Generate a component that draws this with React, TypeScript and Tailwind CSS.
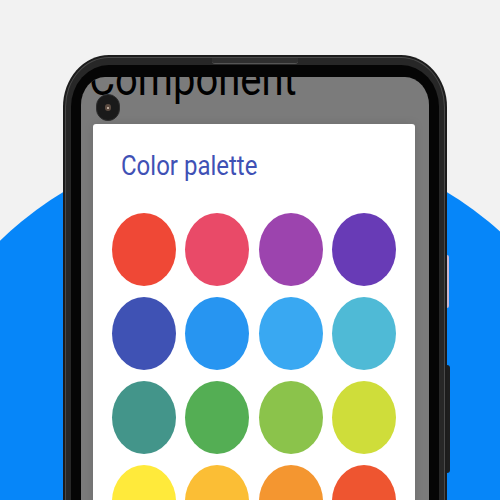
import React from "react";

const colors = [
  "#ef4836", "#e94a68", "#9c44ae", "#683bb6",
  "#3f52b4", "#2795f1", "#39a8f2", "#4fbad6",
  "#43958a", "#54ae54", "#8bc34b", "#cfdd3a",
  "#ffea3b", "#fbbe35", "#f49630", "#ee5530",
];

export default function App() {
  return (
    <div className="relative w-[500px] h-[500px] overflow-hidden bg-[#f2f2f2]">
      {/* blue backdrop */}
      <div className="absolute left-[-113px] top-[138px] w-[736px] h-[838px] rounded-full bg-[#0686f9]" />

      {/* side buttons */}
      <div className="absolute left-[447px] top-[255px] w-[2px] h-[53px] rounded-r-sm bg-[#cdb6cc]" />
      <div className="absolute left-[447px] top-[365px] w-[3px] h-[108px] rounded-r-sm bg-[#1e1e1e]" />

      {/* phone */}
      <div className="absolute left-[63px] top-[55px] w-[384px] h-[560px] rounded-[46px/52px] bg-[#1c1c1c] p-[2px]">
        <div className="h-full rounded-[44px/50px] bg-[#4a4a4a] p-[1px]">
          <div className="h-full rounded-[43px/49px] bg-[#272727] pt-[7px] px-[5px]">
            <div className="h-full rounded-[38px/42px] bg-[#050505] pt-[12px] px-[10px]">
              <div className="relative h-full overflow-hidden rounded-[24px/28px] bg-[#7b7b7b]">
                <div className="mt-[-23px] pl-[8px] h-[46px]">
                  <div
                    className="origin-top-left scale-y-[1.14] text-[40px] leading-[46px] text-black whitespace-nowrap"
                    style={{ fontFamily: "Roboto, 'Noto Sans', sans-serif" }}
                  >
                    Component
                  </div>
                </div>

                {/* camera */}
                <div className="absolute left-[15px] top-[17px] w-[24px] h-[27px] rounded-full bg-[#1a1a1a] border border-[#2e2e2e] flex items-center justify-center">
                  <div className="w-[6px] h-[7px] rounded-full bg-[#5a4a40] flex items-center justify-center">
                    <div className="w-[2px] h-[2px] rounded-full bg-[#d8c8b8]" />
                  </div>
                </div>

                {/* card */}
                <div className="mt-[24px] ml-[12px] w-[322px] h-[500px] rounded-[3px] bg-white shadow-[0_0_10px_rgba(0,0,0,0.12)] pt-[26px]">
                  <div className="pl-[28px] h-[28px]">
                    <div
                      className="origin-top-left scale-y-[1.14] text-[24px] leading-[28px] text-[#3f51b5] whitespace-nowrap"
                      style={{ fontFamily: "Roboto, 'Noto Sans', sans-serif" }}
                    >
                      Color palette
                    </div>
                  </div>
                  <div className="mt-[35px] ml-[19px] grid grid-cols-[repeat(4,64px)] gap-x-[9.33px] gap-y-[11px]">
                    {colors.map((c, i) => (
                      <div key={i} className="w-[64px] h-[73px] rounded-[50%]" style={{ backgroundColor: c }} />
                    ))}
                  </div>
                </div>
              </div>
            </div>
          </div>
        </div>
        {/* speaker */}
        <div className="absolute left-[149px] top-[3px] w-[86px] h-[6px] rounded-b-[3px] bg-[#2f2f2f] border-b border-[#555]" />
      </div>
    </div>
  );
}
